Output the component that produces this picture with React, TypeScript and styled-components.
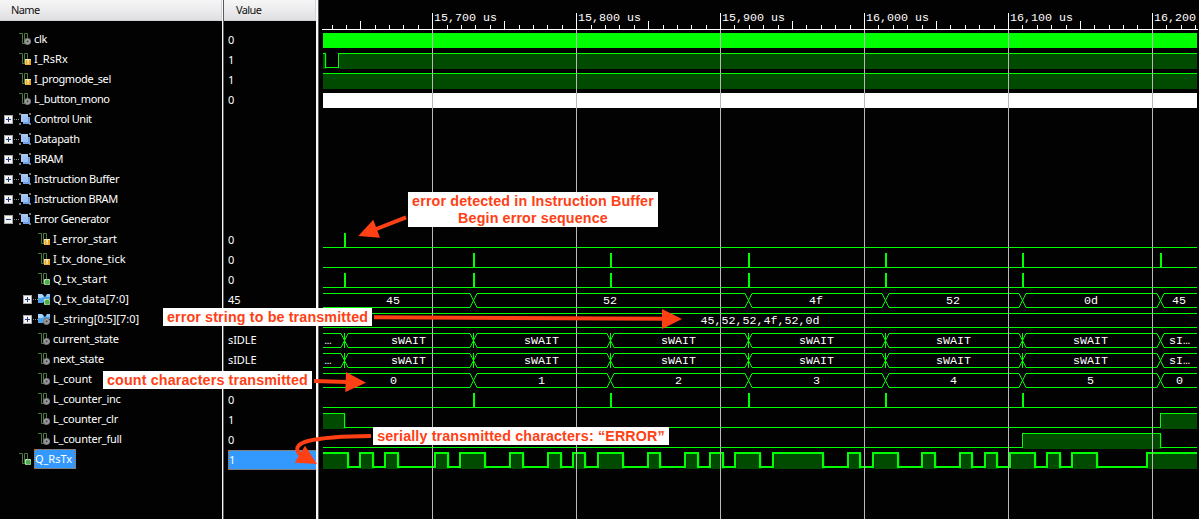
import React from "react";
import styled, { createGlobalStyle } from "styled-components";

const GREEN = "#00ff00";
const FILL = "#004b00";
const EDGE = "#003000";
const RED = "#ff4015";

const GlobalStyle = createGlobalStyle`
  body { margin: 0; background: #020202; overflow: hidden; }
`;

const Viewer = styled.div`
  position: relative;
  display: flex;
  width: 1199px;
  height: 519px;
  overflow: hidden;
  background: #020202;
  color: #fff;
  font-family: "Noto Sans", sans-serif;
  font-size: 11px;
`;

const Column = styled.div<{ $width: number }>`
  display: flex;
  flex-direction: column;
  flex: none;
  width: ${(p) => p.$width}px;
`;

const Splitter = styled.div<{ $bright: number }>`
  flex: none;
  width: ${(p) => p.$bright}px;
  background: #fbf8fb;
  border-right: 1px solid #5a5a5a;
`;

const ColumnHeader = styled.div<{ $pad: number }>`
  box-sizing: border-box;
  height: 21px;
  flex: none;
  padding-left: ${(p) => p.$pad}px;
  line-height: 19px;
  letter-spacing: -0.6px;
  color: #111;
  background: linear-gradient(#f6f6f7, #ececee 50%, #dfdfe2);
  border-bottom: 1px solid #cfcfd3;
  border-right: 1px solid #d8d0d8;
`;

const Rows = styled.div<{ $top: number }>`
  display: flex;
  flex-direction: column;
  padding-top: ${(p) => p.$top}px;
`;

const NameRow = styled.div<{ $depth: number }>`
  display: flex;
  align-items: center;
  height: 20px;
  padding-left: ${(p) => 4 + p.$depth * 19}px;
`;

const Expander = styled.div`
  width: 15px;
  height: 11px;
  flex: none;
  svg { display: block; }
`;

const IconBox = styled.div`
  width: 12px;
  height: 12px;
  flex: none;
  margin-right: 3px;
  svg { display: block; }
`;

const Label = styled.span<{ $selected?: boolean; $spacing: number }>`
  box-sizing: border-box;
  height: 20px;
  line-height: 19px;
  white-space: pre;
  letter-spacing: ${(p) => p.$spacing}px;
  ${(p) => p.$selected && "width: 42px; line-height: 17px; background: #3399ff; border: 1px dotted #cc6600;"}
`;

const ValueCell = styled.div<{ $selected?: boolean }>`
  box-sizing: border-box;
  height: 20px;
  margin-left: 4px;
  line-height: 20px;
  letter-spacing: -0.1px;
  ${(p) =>
    p.$selected && "line-height: 18px; background: #3399ff; border: 1px dotted #cc6600; border-right: 0;"}
`;

const WavePane = styled.div`
  position: relative;
  display: flex;
  flex-direction: column;
  width: 880px;
  svg { display: block; flex: none; }
  text { font-family: "Liberation Mono", monospace; font-size: 11.67px; fill: #fff; white-space: pre; }
`;

const Overlay = styled.svg`
  position: absolute;
  left: 0;
  top: 0;
  pointer-events: none;
`;

const Note = styled.div<{ $x: number; $y: number; $w: number; $h: number }>`
  position: absolute;
  box-sizing: border-box;
  left: ${(p) => p.$x}px;
  top: ${(p) => p.$y}px;
  width: ${(p) => p.$w}px;
  height: ${(p) => p.$h}px;
  background: #fff;
  color: ${RED};
  font-family: "Liberation Sans", sans-serif;
  font-weight: bold;
  font-size: 14.3px;
  letter-spacing: 0.14px;
  line-height: 17px;
  padding-top: 1px;
  text-align: center;
  white-space: nowrap;
`;

type IconKind = "local" | "input" | "output" | "group" | "busOut" | "busLocal";

type Wave =
  | { type: "solid"; color: string }
  | { type: "level"; start: 0 | 1; edges: number[]; thick?: boolean }
  | { type: "pulse"; at: number[] }
  | { type: "bus"; cuts: number[]; bars?: number[]; texts: [string, number][] };

interface Signal {
  name: string;
  icon: IconKind;
  depth: number;
  expander?: "+" | "-";
  value?: string;
  selected?: boolean;
  spacing?: number;
  wave?: Wave;
}

const TICKS = [473, 610, 748, 885, 1022];
const stateWave: Wave = {
  type: "bus",
  cuts: [344, ...TICKS, 1160],
  bars: [344, ...TICKS],
  texts: [
    ["…", 328], ["sWAIT", 408.5], ["sWAIT", 541.5], ["sWAIT", 678.5],
    ["sWAIT", 816.5], ["sWAIT", 953.5], ["sWAIT", 1090.5], ["sI…", 1179.5],
  ],
};

const signals: Signal[] = [
  { name: "clk", icon: "local", depth: 0, value: "0", spacing: -0.35, wave: { type: "solid", color: GREEN } },
  { name: "I_RsRx", icon: "input", depth: 0, value: "1", spacing: 0.1, wave: { type: "level", start: 1, edges: [325, 338] } },
  { name: "I_progmode_sel", icon: "input", depth: 0, value: "1", spacing: -0.38, wave: { type: "level", start: 1, edges: [] } },
  { name: "L_button_mono", icon: "local", depth: 0, value: "0", spacing: -0.41, wave: { type: "solid", color: "#ffffff" } },
  { name: "Control Unit", icon: "group", depth: 0, expander: "+", spacing: -0.42 },
  { name: "Datapath", icon: "group", depth: 0, expander: "+", spacing: -0.3 },
  { name: "BRAM", icon: "group", depth: 0, expander: "+", spacing: -0.5 },
  { name: "Instruction Buffer", icon: "group", depth: 0, expander: "+", spacing: -0.37 },
  { name: "Instruction BRAM", icon: "group", depth: 0, expander: "+", spacing: -0.42 },
  { name: "Error Generator", icon: "group", depth: 0, expander: "-", spacing: -0.4 },
  { name: "I_error_start", icon: "input", depth: 1, value: "0", spacing: 0.03, wave: { type: "pulse", at: [344] } },
  { name: "I_tx_done_tick", icon: "input", depth: 1, value: "0", spacing: 0, wave: { type: "pulse", at: [...TICKS, 1160] } },
  { name: "Q_tx_start", icon: "output", depth: 1, value: "0", spacing: 0.2, wave: { type: "pulse", at: [344, ...TICKS] } },
  {
    name: "Q_tx_data[7:0]", icon: "busOut", depth: 1, expander: "+", value: "45", spacing: 0.15,
    wave: {
      type: "bus", cuts: [473, 748, 885, 1022, 1160],
      texts: [["45", 393], ["52", 610], ["4f", 816], ["52", 953], ["0d", 1091], ["45", 1179]],
    },
  },
  {
    name: "L_string[0:5][7:0]", icon: "busLocal", depth: 1, expander: "+", spacing: -0.02,
    wave: { type: "bus", cuts: [], texts: [["45,52,52,4f,52,0d", 760]] },
  },
  { name: "current_state", icon: "local", depth: 1, value: "sIDLE", wave: stateWave },
  { name: "next_state", icon: "local", depth: 1, value: "sIDLE", wave: stateWave },
  {
    name: "L_count", icon: "local", depth: 1,
    wave: {
      type: "bus", cuts: [...TICKS, 1160],
      texts: [["0", 393.5], ["1", 541.5], ["2", 678.5], ["3", 816.5], ["4", 953.5], ["5", 1090.5], ["0", 1179.5]],
    },
  },
  { name: "L_counter_inc", icon: "local", depth: 1, value: "0", spacing: -0.24, wave: { type: "pulse", at: TICKS } },
  { name: "L_counter_clr", icon: "local", depth: 1, value: "1", spacing: -0.27, wave: { type: "level", start: 1, edges: [344, 1160] } },
  { name: "L_counter_full", icon: "local", depth: 1, value: "0", spacing: -0.24, wave: { type: "level", start: 0, edges: [1022, 1160] } },
  {
    name: "Q_RsTx", icon: "output", depth: 0, value: "1", selected: true, spacing: -0.05,
    wave: {
      type: "level", start: 1, thick: true,
      edges: [
        347, 359, 372, 384, 397, 434, 447, 459, 484, 509, 522, 547, 560, 572, 584, 597, 622, 647, 659,
        684, 697, 709, 722, 734, 759, 772, 822, 847, 859, 872, 897, 921, 934, 959, 971, 984, 996, 1009,
        1034, 1046, 1059, 1071, 1096, 1146,
      ],
    },
  },
];

const WAVE_START = 323;
const WAVE_END = 1197;

function LevelWave({ start, edges, thick }: { start: 0 | 1; edges: number[]; thick?: boolean }) {
  const w = thick ? 2 : 1;
  const hi = thick ? 2 : 3;
  const lo = thick ? 16 : 17;
  const bounds = [WAVE_START, ...edges, WAVE_END];
  const parts: React.ReactNode[] = [];
  for (let i = 0; i < bounds.length - 1; i++) {
    const high = (start + i) % 2 === 1;
    const a = bounds[i];
    const b = bounds[i + 1];
    const last = i === bounds.length - 2;
    const right = last ? b : b + w;
    if (high) {
      const fillRight = last ? b : b + w + 1;
      parts.push(<rect key={`e${i}`} x={a} y={hi + w} width={fillRight - a} height={19 - hi - w} fill={EDGE} />);
      const innerLeft = i === 0 ? a : a + w + 1;
      parts.push(
        <rect key={`f${i}`} x={innerLeft} y={hi + w} width={(last ? b : b + w) - innerLeft} height={19 - hi - w} fill={FILL} />
      );
    }
    parts.push(<rect key={`l${i}`} x={a} y={high ? hi : lo} width={right - a} height={w} fill={GREEN} />);
  }
  return (
    <>
      {parts}
      {edges.map((x) => (
        <rect key={x} x={x} y={hi} width={w} height={lo - hi + w} fill={GREEN} />
      ))}
    </>
  );
}

function BusWave({ cuts, bars = [], texts }: { cuts: number[]; bars?: number[]; texts: [string, number][] }) {
  const starts = [WAVE_START, ...cuts.map((c) => c + 4)];
  const ends = [...cuts.map((c) => c - 3), WAVE_END];
  return (
    <>
      {starts.map((s, i) => (
        <g key={s} fill={GREEN}>
          <rect x={s} y={3} width={ends[i] - s} height={1} />
          <rect x={s} y={17} width={ends[i] - s} height={1} />
        </g>
      ))}
      {cuts.map((c) => (
        <path key={c} d={`M${c - 3} 3.5L${c + 4} 17.5M${c + 4} 3.5L${c - 3} 17.5`} stroke={GREEN} strokeWidth={1} />
      ))}
      {bars.map((c) => (
        <rect key={c} x={c} y={3} width={1} height={15} fill={GREEN} />
      ))}
      {texts.map(([t, x]) => (
        <text key={x} x={x} y={14} textAnchor="middle">{t}</text>
      ))}
    </>
  );
}

function WaveRow({ wave }: { wave?: Wave }) {
  return (
    <svg width={880} height={20} viewBox="319 0 880 20" shapeRendering={wave?.type === "bus" ? undefined : "crispEdges"}>
      {wave?.type === "solid" && <rect x={WAVE_START} y={3} width={WAVE_END - WAVE_START} height={15} fill={wave.color} />}
      {wave?.type === "level" && <LevelWave {...wave} />}
      {wave?.type === "pulse" && (
        <g fill={GREEN}>
          <rect x={WAVE_START} y={17} width={WAVE_END - WAVE_START} height={1} />
          {wave.at.map((x) => <rect key={x} x={x} y={3} width={2} height={15} />)}
        </g>
      )}
      {wave?.type === "bus" && <BusWave {...wave} />}
    </svg>
  );
}

const MAJOR = [432, 576, 720, 864, 1008, 1152];
const HALF = [360, 504, 648, 792, 936, 1080];
const MINOR = [
  332, 346, 375, 389, 403, 418, 447, 461, 475, 490, 519, 533, 547, 562, 591, 605, 619, 634, 663, 677, 691, 706,
  734, 749, 763, 778, 806, 821, 835, 850, 878, 893, 907, 922, 950, 965, 979, 994, 1022, 1037, 1051, 1066,
  1094, 1109, 1123, 1137, 1166, 1181, 1195,
];
const TIMES = ["15,700 us", "15,800 us", "15,900 us", "16,000 us", "16,100 us", "16,200"];

function Ruler() {
  return (
    <svg width={880} height={30} viewBox="319 0 880 30">
      <g fill="#fff">
        <rect x={322} y={29} width={876} height={1} />
        {MAJOR.map((x) => <rect key={x} x={x} y={13} width={1} height={17} />)}
        {HALF.map((x) => <rect key={x} x={x} y={21} width={1} height={9} />)}
        {MINOR.map((x) => <rect key={x} x={x} y={25} width={1} height={5} />)}
      </g>
      {TIMES.map((t, i) => <text key={t} x={MAJOR[i] + 2} y={21}>{t}</text>)}
    </svg>
  );
}

function Badge({ kind }: { kind: "local" | "input" | "output" }) {
  if (kind === "input")
    return (
      <g>
        <rect x={6} y={6} width={6} height={6} fill="#e9a820" />
        <rect x={6} y={6} width={6} height={1} fill="#f8e7a8" />
        <rect x={6} y={7} width={1} height={5} fill="#f3cf72" />
        <rect x={8.5} y={7} width={1.2} height={2.6} fill="#fff" />
        <rect x={8.5} y={10.2} width={1.2} height={1} fill="#fff" />
      </g>
    );
  if (kind === "output")
    return (
      <g>
        <rect x={6} y={6} width={6} height={6} rx={1.2} fill="#d5efd0" />
        <circle cx={9.2} cy={9.2} r={2.6} fill="#4fae4a" />
      </g>
    );
  return (
    <g>
      <circle cx={8.6} cy={8.4} r={3.5} fill="#7c7c7c" />
      <circle cx={8.6} cy={8.4} r={1.9} fill="none" stroke="#b8b8b8" strokeWidth={0.8} />
      <circle cx={8.6} cy={8.4} r={0.8} fill="#444" />
    </g>
  );
}

function SignalIcon({ kind }: { kind: IconKind }) {
  if (kind === "group")
    return (
      <svg width={12} height={12}>
        <g fill="#777">
          <rect x={0} y={0} width={2} height={2} /><rect x={10} y={0} width={2} height={2} />
          <rect x={0} y={10} width={2} height={2} /><rect x={10} y={10} width={2} height={2} />
        </g>
        <rect x={2} y={1} width={7} height={8} fill="#a9c6f2" />
        <rect x={4} y={4} width={7} height={7} fill="#6f9fe6" />
        <rect x={4} y={4} width={5} height={5} fill="#9cbff3" />
      </svg>
    );
  if (kind === "busOut" || kind === "busLocal")
    return (
      <svg width={12} height={12}>
        <path d="M0 1H4L7 4L9 1H12V6H8L5 10H0Z" fill="#4fa3e6" />
        <path d="M0 1H4L6 3.5L4 5H0Z" fill="#a8d6fa" />
        <path d="M9 1H12V4H8Z" fill="#8cc4f4" />
        <Badge kind={kind === "busOut" ? "output" : "local"} />
      </svg>
    );
  return (
    <svg width={12} height={12}>
      <path d="M0 .5H3.5V10.5H6.5M5.5 10.5V.5H8.5V6" fill="none" stroke="#4d7a42" strokeWidth={1} />
      <Badge kind={kind} />
    </svg>
  );
}

function ExpandMark({ sign }: { sign: "+" | "-" }) {
  return (
    <svg width={15} height={11}>
      <rect x={0.5} y={1.5} width={8} height={8} fill="#f6f6f4" stroke="#a8a8a8" />
      <path d={sign === "+" ? "M2 5.5H7M4.5 3V8" : "M2 5.5H7"} stroke="#23408f" />
      <path d="M10 5.5H15" stroke="#8a8a8a" strokeDasharray="1 1" />
    </svg>
  );
}

function Arrows() {
  return (
    <Overlay width={1199} height={519}>
      <g fill="none" stroke={RED} strokeWidth={4}>
        <path d="M406 217.3L375 229.5" />
        <path d="M374 317.2L664 318.8" />
        <path d="M314 381L348 382" />
        <path d="M371 436C345 436.2 322 437.5 308 441C296 444 294 450 302 456" />
      </g>
      <g fill={RED}>
        <path d="M358.3 236L373.3 219.7L380 237.7Z" />
        <path d="M682 319L662 309V329Z" />
        <path d="M366 382.7L346 372L345.3 392Z" />
        <path d="M317 464L305 445.7L294.7 462.7Z" />
      </g>
    </Overlay>
  );
}

export default function App() {
  return (
    <>
      <GlobalStyle />
      <Viewer>
        <Column $width={222}>
          <ColumnHeader $pad={11}>Name</ColumnHeader>
          <Rows $top={8}>
            {signals.map((s) => (
              <NameRow key={s.name} $depth={s.depth}>
                <Expander>{s.expander && <ExpandMark sign={s.expander} />}</Expander>
                <IconBox><SignalIcon kind={s.icon} /></IconBox>
                <Label $selected={s.selected} $spacing={s.spacing ?? -0.2}>{s.name}</Label>
              </NameRow>
            ))}
          </Rows>
        </Column>
        <Splitter $bright={1} />
        <Column $width={92}>
          <ColumnHeader $pad={12}>Value</ColumnHeader>
          <Rows $top={9}>
            {signals.map((s) => (
              <ValueCell key={s.name} $selected={s.selected}>{s.value}</ValueCell>
            ))}
          </Rows>
        </Column>
        <Splitter $bright={2} />
        <WavePane>
          <Ruler />
          {signals.map((s) => <WaveRow key={s.name} wave={s.wave} />)}
          <Overlay width={880} height={519} viewBox="319 0 880 519">
            {MAJOR.map((x) => <rect key={x} x={x} y={30} width={1} height={489} fill="#b8b8b8" />)}
          </Overlay>
        </WavePane>
        <Note $x={408} $y={192} $w={250} $h={35}>
          error detected in Instruction Buffer<br />Begin error sequence
        </Note>
        <Note $x={163} $y={308} $w={209} $h={18}>error string to be transmitted</Note>
        <Note $x={103} $y={371} $w={209} $h={18}>count characters transmitted</Note>
        <Note $x={373} $y={427} $w={296} $h={18}>serially transmitted characters: “ERROR”</Note>
        <Arrows />
      </Viewer>
    </>
  );
}
